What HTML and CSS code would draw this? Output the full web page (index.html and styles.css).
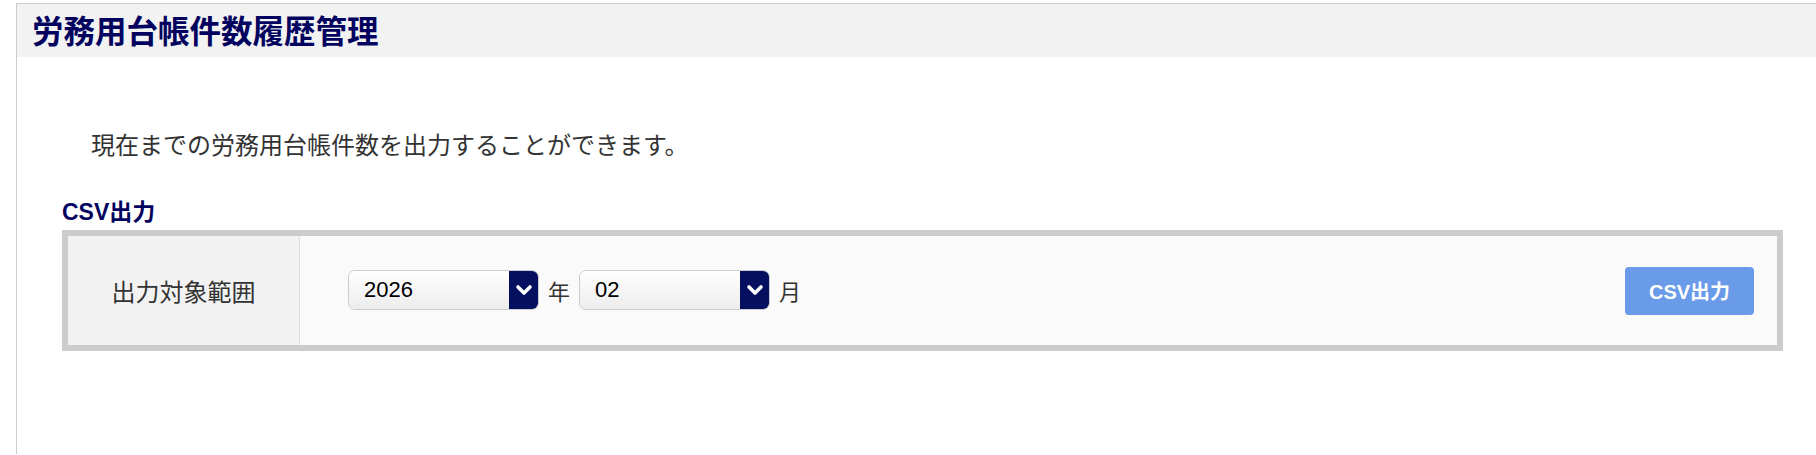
FILE: index.html
```html
<!DOCTYPE html>
<html lang="ja">
<head>
<meta charset="utf-8">
<title>労務用台帳件数履歴管理</title>
<link rel="stylesheet" href="styles.css">
</head>
<body>
<div class="page">
  <header class="page-header">
    <h1 class="page-title">労務用台帳件数履歴管理</h1>
  </header>
  <p class="lead">現在までの労務用台帳件数を出力することができます。</p>
  <h2 class="section-title">CSV出力</h2>
  <div class="form-box">
    <div class="form-label">出力対象範囲</div>
    <div class="form-value">
      <div class="range">
        <div class="select">
          <span class="select-value">2026</span>
          <span class="select-arrow"><svg width="18" height="12" viewBox="0 0 18 12"><path d="M3 3 L9 9 L15 3" fill="none" stroke="#fff" stroke-width="3.6" stroke-linecap="round" stroke-linejoin="round"/></svg></span>
        </div>
        <span class="unit">年</span>
        <div class="select">
          <span class="select-value">02</span>
          <span class="select-arrow"><svg width="18" height="12" viewBox="0 0 18 12"><path d="M3 3 L9 9 L15 3" fill="none" stroke="#fff" stroke-width="3.6" stroke-linecap="round" stroke-linejoin="round"/></svg></span>
        </div>
        <span class="unit">月</span>
      </div>
      <button class="csv-button" type="button">CSV出力</button>
    </div>
  </div>
</div>
</body>
</html>
```
FILE: styles.css
```css
html, body {
  margin: 0;
  padding: 0;
  background: #fff;
}
body {
  font-family: "Liberation Sans", "Noto Sans CJK JP", sans-serif;
  overflow: hidden;
}
.page {
  margin: 3px 0 0 16px;
  border-left: 1px solid #cccccc;
  border-top: 1px solid #cccccc;
  min-height: 451px;
  box-sizing: border-box;
}
.page-header {
  height: 53px;
  background: #f2f2f2;
  display: flex;
  align-items: center;
  padding-left: 15px;
}
.page-title {
  margin: 0;
  font-size: 31.5px;
  line-height: 32px;
  font-weight: 700;
  color: #03035f;
  font-family: "Noto Sans CJK JP", sans-serif;
  position: relative;
  top: -2px;
}
.lead {
  margin: 75px 0 0 74px;
  font-size: 24px;
  line-height: 24px;
  color: #333333;
  font-family: "Noto Sans CJK JP", sans-serif;
}
.section-title {
  margin: 45px 0 0 45px;
  font-size: 23px;
  line-height: 23px;
  font-weight: 700;
  color: #03035f;
}
.form-box {
  margin: 6px 33px 0 45px;
  border: 6px solid #cccccc;
  display: grid;
  grid-template-columns: 232px 1fr;
}
.form-label {
  background: #f2f2f2;
  display: flex;
  align-items: center;
  justify-content: center;
  font-size: 24px;
  color: #333333;
  font-family: "Noto Sans CJK JP", sans-serif;
  border-right: 1px solid #dddddd;
}
.form-value {
  background: #fafafa;
  height: 109px;
  padding: 0 23px 0 48px;
  display: flex;
  align-items: center;
  justify-content: space-between;
}
.range {
  display: flex;
  align-items: center;
  gap: 9px;
  margin-top: -2px;
}
.select {
  width: 191px;
  height: 40px;
  box-sizing: border-box;
  display: flex;
  border: 1px solid #cccccc;
  border-radius: 7px;
  overflow: hidden;
}
.select-value {
  flex: 1;
  display: flex;
  align-items: center;
  padding-left: 15px;
  font-size: 22px;
  color: #000;
  background: linear-gradient(#ffffff, #ececec);
}
.select-arrow {
  width: 30px;
  background: #040f60;
  display: flex;
  align-items: center;
  justify-content: center;
  margin: -1px -1px -1px 0;
}
.unit {
  font-size: 22px;
  color: #333333;
  font-family: "Noto Sans CJK JP", sans-serif;
}
.csv-button {
  width: 129px;
  height: 48px;
  border: none;
  border-radius: 4px;
  background: #6a9be9;
  color: #fff;
  font-family: "Liberation Sans", "Noto Sans CJK JP", sans-serif;
  font-size: 20px;
  font-weight: 700;
  padding: 0;
}
```
